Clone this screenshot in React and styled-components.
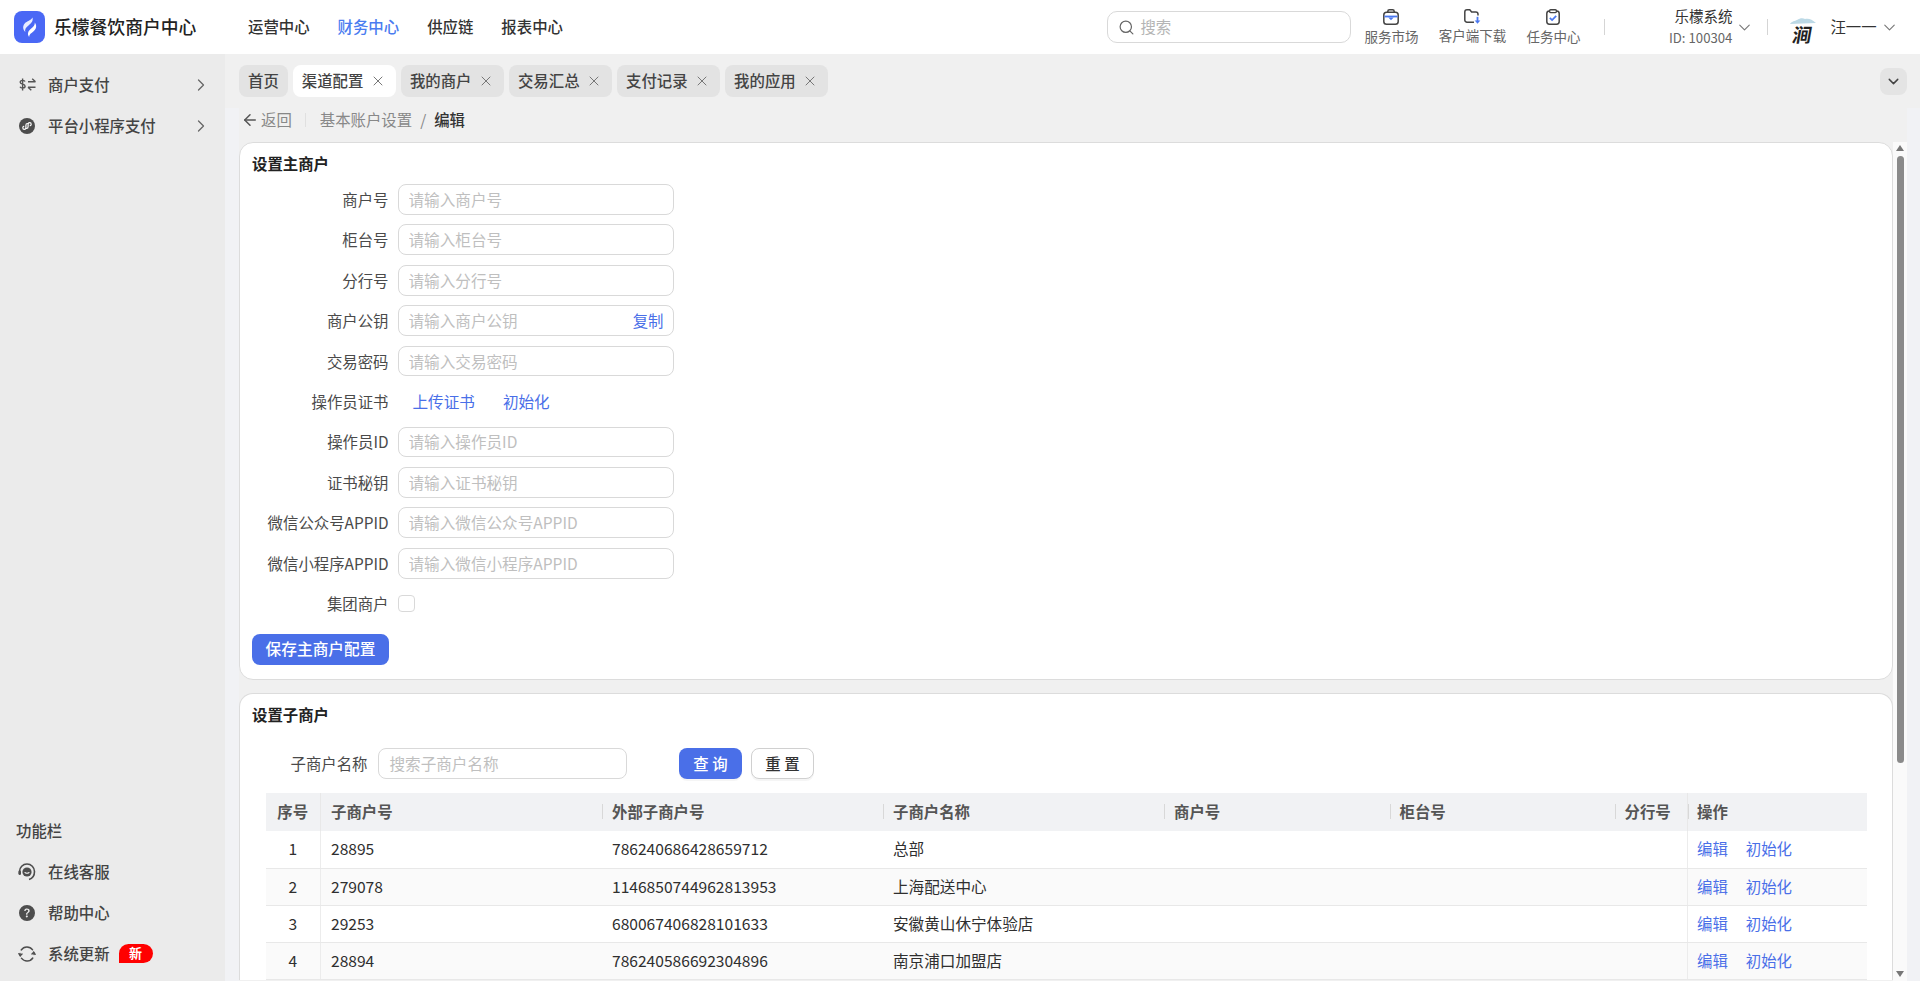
import React from "react";
import styled, { createGlobalStyle } from "styled-components";
import { ChevronDown, ChevronRight, Search, X, ArrowLeft } from "lucide-react";
import { BsQuestionCircleFill } from "react-icons/bs";

const blue = "#4a6fe8";

const GlobalStyle = createGlobalStyle`
  * { box-sizing: border-box; }
  html, body { margin: 0; padding: 0; height: 100%; overflow: hidden; }
  body {
    font-family: "Noto Sans CJK SC", "Noto Sans", sans-serif;
    font-size: 15.4px;
    color: #333;
    background: #f0f0f0;
  }
`;

const tabs = [
  { name: "首页", fixed: true },
  { name: "渠道配置", active: true },
  { name: "我的商户" },
  { name: "交易汇总" },
  { name: "支付记录" },
  { name: "我的应用" },
];

const fields = [
  { label: "商户号", placeholder: "请输入商户号" },
  { label: "柜台号", placeholder: "请输入柜台号" },
  { label: "分行号", placeholder: "请输入分行号" },
  { label: "商户公钥", placeholder: "请输入商户公钥", copy: true },
  { label: "交易密码", placeholder: "请输入交易密码" },
  { label: "操作员证书", links: ["上传证书", "初始化"] },
  { label: "操作员ID", placeholder: "请输入操作员ID" },
  { label: "证书秘钥", placeholder: "请输入证书秘钥" },
  { label: "微信公众号APPID", placeholder: "请输入微信公众号APPID" },
  { label: "微信小程序APPID", placeholder: "请输入微信小程序APPID" },
  { label: "集团商户", checkbox: true },
];

const rows = [
  ["1", "28895", "786240686428659712", "总部"],
  ["2", "279078", "1146850744962813953", "上海配送中心"],
  ["3", "29253", "680067406828101633", "安徽黄山休宁体验店"],
  ["4", "28894", "786240586692304896", "南京浦口加盟店"],
];

const LogoIcon = () => (
  <svg width="31" height="32" viewBox="0 0 31 32">
    <rect width="31" height="32" rx="8" fill="#4a68f5" />
    <path d="M18.5 6.5c.9 3.6-1.2 5.6-4 7.9-2.6 2.1-4 3.8-3.2 6.6-2.4-2.4-3-5.800-.6-8.500 2.300-2.600 6.200-2.900 7.800-6z" fill="#e9edff" />
    <path d="M20.800 11.500c2.200 3 1.700 6.300-1.200 8.800-2.400 2.100-4.400 2.900-4.500 5.700-1.900-2.500-1.500-5.300 1-7.500 2.400-2.100 4.800-3.500 4.700-7z" fill="#fff" />
  </svg>
);

const ExchangeIcon = () => (
  <svg width="17" height="13" viewBox="0 0 17 13" fill="none" stroke="#555" strokeWidth="1.400">
    <path d="M6 3.600C5.700 2.800 4.900 2.400 3.600 2.400 2.200 2.400 1.200 3 1.200 4.200s1 1.600 2.400 2 2.500.8 2.500 2c0 1.200-1.100 1.800-2.500 1.800-1.300 0-2.200-.5-2.600-1.300M3.600.6v11.800" />
    <path d="M9 3.800h7.500M13.200.8l3.300 3M16.500 9.200H9M12.300 12.200l-3.300-3" />
  </svg>
);

const MiniAppIcon = () => (
  <svg width="16" height="16" viewBox="0 0 16 16">
    <circle cx="8" cy="8" r="8" fill="#4d4d4d" />
    <path d="M6.900 7.200v2.500c0 1-.8 1.700-1.600 1.700s-1.500-.7-1.500-1.600c0-.7.400-1.200 1-1.500M9.100 8.800V6.300c0-1 .8-1.700 1.600-1.700s1.500.7 1.500 1.600c0 .7-.4 1.200-1 1.500M6.900 7.200c0-1 .9-1.700 1.500-1.700M9.100 8.800c0 1-.9 1.700-1.500 1.700" fill="none" stroke="#fff" strokeWidth="1.200" strokeLinecap="round" />
  </svg>
);

const ServiceIcon = () => (
  <svg width="18" height="18" viewBox="0 0 18 18" fill="none">
    <path d="M1.500 11V8.500a7.500 7.500 0 0 1 15 0c0 4-2 7-5.500 8" stroke="#4d4d4d" strokeWidth="1.600" />
    <circle cx="9" cy="9" r="4.600" fill="#4d4d4d" />
    <path d="M7 9.500c.5 1 3.500 1 4 0" stroke="#fff" strokeWidth="1.100" strokeLinecap="round" />
    <rect x="0.500" y="7.500" width="2.500" height="4.500" rx="1.200" fill="#4d4d4d" />
  </svg>
);

const UpdateIcon = () => (
  <svg width="18" height="18" viewBox="0 0 18 18" fill="none" stroke="#4d4d4d" strokeWidth="1.400" strokeLinecap="round">
    <path d="M3.200 5A7 7 0 0 1 14.600 4.800" />
    <path d="M14.800 13A7 7 0 0 1 3.400 13.200" />
    <path d="M16 9.500a7 7 0 0 0-.3-2.300M2 8.500a7 7 0 0 0 .3 2.300" />
    <path d="M0.800 8.700l1.500 2 1.700-1.700M17.200 9.300l-1.500-2-1.700 1.700" />
  </svg>
);

const BagIcon = () => (
  <svg width="16" height="16" viewBox="0 0 16 16" fill="none">
    <rect x="0.800" y="3.200" width="14.400" height="12" rx="2.800" stroke="#444" strokeWidth="1.500" />
    <path d="M4.800 3.200V2.400A1.600 1.600 0 0 1 6.400.8h3.200a1.600 1.600 0 0 1 1.600 1.600v.8" stroke="#444" strokeWidth="1.500" />
    <path d="M1.500 6.600h13v1.800H1.500z" fill="#4a78f0" />
    <path d="M5.300 8.400h5.400L8 11.200z" fill="#4a78f0" />
  </svg>
);

const FolderIcon = () => (
  <svg width="17" height="15" viewBox="0 0 17 15" fill="none">
    <path d="M10 13.200H3A2.200 2.200 0 0 1 .8 11V3A2.200 2.200 0 0 1 3 .8h2.800l1.800 2.200h4.200a2.200 2.200 0 0 1 2.200 2.200v1.300" stroke="#444" strokeWidth="1.500" />
    <path d="M13.500 7.800v5" stroke="#4a78f0" strokeWidth="1.800" />
    <path d="M10.700 11.400h5.600L13.500 14.800z" fill="#4a78f0" />
  </svg>
);

const ClipIcon = () => (
  <svg width="14" height="16" viewBox="0 0 14 16" fill="none">
    <rect x="0.800" y="2" width="12.400" height="13.200" rx="2.600" stroke="#444" strokeWidth="1.500" />
    <rect x="3.600" y="0.800" width="6.800" height="2.800" rx="1" fill="#fff" stroke="#444" strokeWidth="1.400" />
    <path d="M3.800 8.800l2.300 2.300 4.100-4.300" stroke="#4a78f0" strokeWidth="1.700" />
  </svg>
);

function App() {
  return (
    <Page>
      <GlobalStyle />
      <Header>
        <Brand>
          <LogoIcon />
          <BrandName>乐檬餐饮商户中心</BrandName>
        </Brand>
        <Nav>
          <NavItem>运营中心</NavItem>
          <NavItem $active>财务中心</NavItem>
          <NavItem>供应链</NavItem>
          <NavItem>报表中心</NavItem>
        </Nav>
        <SearchBox>
          <Search size={17} color="#666" strokeWidth={1.7} />
          <SearchInput placeholder="搜索" />
        </SearchBox>
        <Tools>
          <Tool $width={54}><BagIcon /><span>服务市场</span></Tool>
          <Tool $width={70}><FolderIcon /><span>客户端下载</span></Tool>
          <Tool $width={54}><ClipIcon /><span>任务中心</span></Tool>
        </Tools>
        <Divider $left={24} />
        <Org>
          <OrgName>乐檬系统</OrgName>
          <OrgId>ID: 100304</OrgId>
        </Org>
        <ChevronDown size={19} color="#777" strokeWidth={1.4} style={{ marginLeft: 3 }} />
        <Divider $left={13} />
        <Avatar>
          <svg width="28" height="8" viewBox="0 0 28 8">
            <path d="M1 7c2-3 5-3 7-4 3-2 6-2 8-1 3-1 7 0 11 4z" fill="#bcd9e6" />
          </svg>
          <AvatarChar>涧</AvatarChar>
        </Avatar>
        <UserName>汪一一</UserName>
        <ChevronDown size={19} color="#777" strokeWidth={1.4} style={{ marginLeft: 3 }} />
      </Header>

      <Body>
        <Sidebar>
          <div>
            <SideRow>
              <SideIcon><ExchangeIcon /></SideIcon>
              <SideText>商户支付</SideText>
              <SideArrow><ChevronRight size={20} color="#666" strokeWidth={1.5} /></SideArrow>
            </SideRow>
            <SideRow>
              <SideIcon><MiniAppIcon /></SideIcon>
              <SideText>平台小程序支付</SideText>
              <SideArrow><ChevronRight size={20} color="#666" strokeWidth={1.5} /></SideArrow>
            </SideRow>
          </div>
          <div>
            <SideTitle>功能栏</SideTitle>
            <SideRow>
              <SideIcon><ServiceIcon /></SideIcon>
              <SideText>在线客服</SideText>
            </SideRow>
            <SideRow>
              <SideIcon><BsQuestionCircleFill size={16} color="#4d4d4d" /></SideIcon>
              <SideText>帮助中心</SideText>
            </SideRow>
            <SideRow>
              <SideIcon><UpdateIcon /></SideIcon>
              <SideText>系统更新</SideText>
              <NewBadge>新</NewBadge>
            </SideRow>
          </div>
        </Sidebar>

        <Main>
          <TabBar>
            {tabs.map((t) => (
              <Tab key={t.name} $active={t.active} $fixed={t.fixed}>
                <TabText>{t.name}</TabText>
                {!t.fixed && <X size={16} color="#777" strokeWidth={1.5} />}
              </Tab>
            ))}
            <CollapseBtn><ChevronDown size={17} color="#444" strokeWidth={2} /></CollapseBtn>
          </TabBar>

          <Crumbs>
            <BackLink><ArrowLeft size={18} color="#555" strokeWidth={2} />返回</BackLink>
            <CrumbLine />
            <CrumbItem>基本账户设置</CrumbItem>
            <CrumbSlash>/</CrumbSlash>
            <CrumbCurrent>编辑</CrumbCurrent>
          </Crumbs>

          <ScrollRow>
            <Scroller>
              <Card>
                <CardTitle>设置主商户</CardTitle>
                <Form>
                  {fields.map((f) => (
                    <FormRow key={f.label}>
                      <FormLabel>{f.label}</FormLabel>
                      {f.placeholder && (
                        <InputWrap>
                          <TextInput placeholder={f.placeholder} />
                          {f.copy && <LinkText>复制</LinkText>}
                        </InputWrap>
                      )}
                      {f.links && (
                        <FormLinks>
                          {f.links.map((l) => <LinkText key={l}>{l}</LinkText>)}
                        </FormLinks>
                      )}
                      {f.checkbox && <CheckBox />}
                    </FormRow>
                  ))}
                </Form>
                <SaveButton>保存主商户配置</SaveButton>
              </Card>

              <SubCard>
                <CardTitle>设置子商户</CardTitle>
                <Filter>
                  <FilterLabel>子商户名称</FilterLabel>
                  <FilterInput placeholder="搜索子商户名称" />
                  <QueryButton>查 询</QueryButton>
                  <ResetButton>重 置</ResetButton>
                </Filter>
                <Table>
                  <colgroup>
                    <col width="55" />
                    <col width="281.500" />
                    <col width="281" />
                    <col width="281" />
                    <col width="225.500" />
                    <col width="225" />
                    <col width="73" />
                    <col width="179" />
                  </colgroup>
                  <thead>
                    <tr>
                      <Th $center $edge>序号</Th>
                      <Th>子商户号</Th>
                      <Th $line>外部子商户号</Th>
                      <Th $line>子商户名称</Th>
                      <Th $line>商户号</Th>
                      <Th $line>柜台号</Th>
                      <Th $line>分行号</Th>
                      <Th $line $ops>操作</Th>
                    </tr>
                  </thead>
                  <tbody>
                    {rows.map((r, i) => (
                      <Tr key={r[0]} $even={i % 2 === 1}>
                        <Td $center $edge>{r[0]}</Td>
                        <Td>{r[1]}</Td>
                        <Td>{r[2]}</Td>
                        <Td>{r[3]}</Td>
                        <Td />
                        <Td />
                        <Td />
                        <Td $ops>
                          <OpLink>编辑</OpLink>
                          <OpLink>初始化</OpLink>
                        </Td>
                      </Tr>
                    ))}
                  </tbody>
                </Table>
              </SubCard>
            </Scroller>
            <ScrollTrack>
              <ArrowUp />
              <ScrollThumb />
              <ArrowDown />
            </ScrollTrack>
          </ScrollRow>
        </Main>
      </Body>
    </Page>
  );
}

const Page = styled.div`
  height: 100vh;
  display: flex;
  flex-direction: column;
  overflow: hidden;
`;

const Header = styled.header`
  height: 54px;
  flex-shrink: 0;
  background: #fff;
  display: flex;
  align-items: center;
  padding-left: 14px;
`;

const Brand = styled.div`
  width: 234px;
  display: flex;
  align-items: center;
  gap: 9px;
  padding-bottom: 1px;
`;

const BrandName = styled.div`
  font-size: 17.800px;
  font-weight: 500;
  color: #222;
  white-space: nowrap;
  padding-bottom: 2px;
`;

const Nav = styled.nav`
  display: flex;
  gap: 28px;
  padding-bottom: 2px;
`;

const NavItem = styled.div`
  font-weight: 500;
  color: ${(p) => (p.$active ? "#4a7cf0" : "#333")};
`;

const SearchBox = styled.div`
  width: 244px;
  height: 32px;
  margin-left: 544.500px;
  border: 1px solid #d9d9d9;
  border-radius: 10px;
  display: flex;
  align-items: center;
  gap: 5px;
  padding-left: 10px;
`;

const SearchInput = styled.input`
  flex: 1;
  min-width: 0;
  border: none;
  outline: none;
  background: none;
  font: inherit;
  padding: 0 0 2px;
  &::placeholder { color: #b5b5b5; }
`;

const Tools = styled.div`
  display: flex;
  gap: 19px;
  margin-left: 13px;
`;

const Tool = styled.div`
  width: ${(p) => p.$width}px;
  display: flex;
  flex-direction: column;
  align-items: center;
  gap: 2px;
  font-size: 13.500px;
  line-height: 18px;
  color: #666;
  white-space: nowrap;
`;

const Divider = styled.div`
  width: 1px;
  height: 16px;
  background: #d5d5d5;
  margin-left: ${(p) => p.$left}px;
`;

const Org = styled.div`
  width: 127px;
  text-align: right;
`;

const OrgName = styled.div`
  font-size: 14.500px;
  line-height: 22px;
  color: #333;
`;

const OrgId = styled.div`
  font-size: 13.200px;
  line-height: 22px;
  color: #666;
`;

const Avatar = styled.div`
  width: 33px;
  height: 35px;
  margin-left: 18px;
  border-radius: 8px;
  background: #fff;
  display: flex;
  flex-direction: column;
  align-items: center;
  padding-top: 7px;
  overflow: hidden;
`;

const AvatarChar = styled.div`
  font-size: 19px;
  line-height: 19px;
  font-weight: 700;
  color: #222;
  transform: skewX(-10deg);
  margin-top: -1px;
`;

const UserName = styled.div`
  margin-left: 11px;
  padding-bottom: 2px;
  color: #333;
`;

const Body = styled.div`
  flex: 1;
  min-height: 0;
  display: flex;
`;

const Sidebar = styled.aside`
  width: 225px;
  flex-shrink: 0;
  background: #ebebeb;
  display: flex;
  flex-direction: column;
  justify-content: space-between;
  padding: 10px 0 7px;
`;

const SideRow = styled.div`
  height: 41px;
  display: flex;
  align-items: center;
  padding-left: 18px;
`;

const SideIcon = styled.div`
  width: 18px;
  height: 18px;
  display: flex;
  align-items: center;
  justify-content: center;
`;

const SideText = styled.div`
  margin-left: 12px;
  padding-bottom: 2px;
  font-weight: 500;
  color: #444;
`;

const SideArrow = styled.div`
  margin-left: auto;
  margin-right: 14px;
  display: flex;
`;

const SideTitle = styled.div`
  padding-left: 16px;
  line-height: 24px;
  margin-bottom: 9px;
  font-weight: 500;
  color: #444;
`;

const NewBadge = styled.div`
  width: 34px;
  height: 19px;
  margin-left: 9px;
  background: #f00;
  color: #fff;
  border-radius: 10px 10px 10px 0;
  font-size: 13px;
  font-weight: 700;
  line-height: 18px;
  text-align: center;
`;

const Main = styled.main`
  flex: 1;
  min-width: 0;
  display: flex;
  flex-direction: column;
  background: #f1f2f5;
`;

const TabBar = styled.div`
  height: 54px;
  flex-shrink: 0;
  background: #f0f0f0;
  display: flex;
  align-items: center;
  gap: 5px;
  padding: 0 13px 0 14px;
`;

const Tab = styled.div`
  height: 32px;
  display: flex;
  align-items: center;
  gap: 6.500px;
  padding: 0 ${(p) => (p.$fixed ? 9 : 10)}px 0 9px;
  border-radius: 8px;
  color: #444;
  background: ${(p) => (p.$active ? "#fff" : "#e3e3e3")};
`;

const TabText = styled.span`
  padding-bottom: 2px;
  font-weight: 500;
`;

const CollapseBtn = styled.div`
  width: 27px;
  height: 27px;
  margin-left: auto;
  border-radius: 8px;
  background: #e4e4e4;
  display: flex;
  align-items: center;
  justify-content: center;
`;

const Crumbs = styled.div`
  height: 34px;
  flex-shrink: 0;
  margin: 0 13px 0 14px;
  background: #f0f0f0;
  display: flex;
  align-items: flex-start;
  line-height: 23px;
  color: #888;
`;

const BackLink = styled.div`
  display: flex;
  align-items: center;
  gap: 2px;
  padding-left: 2px;
`;

const CrumbLine = styled.div`
  width: 1px;
  height: 14px;
  margin: 5px 14px 0 13px;
  background: #e0e0e0;
`;

const CrumbItem = styled.div`
  color: #888;
`;

const CrumbSlash = styled.div`
  margin: 0 8px;
  color: #888;
`;

const CrumbCurrent = styled.div`
  color: #333;
  font-weight: 500;
`;

const ScrollRow = styled.div`
  flex: 1;
  min-height: 0;
  display: flex;
  margin: 0 13px 0 14px;
  background: #f0f0f0;
`;

const Scroller = styled.div`
  flex: 1;
  min-width: 0;
  overflow: hidden;
`;

const Card = styled.section`
  background: #fff;
  border: 1px solid #dcdcdc;
  border-radius: 14px;
  padding: 9px 13px 14px 12px;
  margin-bottom: 13px;
`;

const SubCard = styled(Card)`
  padding-bottom: 0;
  border-bottom: none;
  margin-bottom: 0;
  border-bottom-left-radius: 0;
  border-bottom-right-radius: 0;
`;

const CardTitle = styled.div`
  font-weight: 700;
  line-height: 22px;
  color: #222;
`;

const Form = styled.div`
  display: flex;
  flex-direction: column;
  gap: 9.630px;
  margin-top: 10px;
`;

const FormRow = styled.div`
  height: 30.800px;
  display: flex;
  align-items: center;
  gap: 9px;
`;

const FormLabel = styled.label`
  width: 136.500px;
  padding-bottom: 1px;
  text-align: right;
  color: #4a4a4a;
  white-space: nowrap;
`;

const InputWrap = styled.div`
  width: 276px;
  height: 100%;
  border: 1px solid #d9d9d9;
  border-radius: 8px;
  display: flex;
  align-items: center;
  padding: 0 9px 0 10px;
`;

const TextInput = styled.input`
  flex: 1;
  min-width: 0;
  border: none;
  outline: none;
  padding: 0 0 1px;
  background: none;
  font: inherit;
  font-size: 15.600px;
  &::placeholder { color: #bfbfbf; }
`;

const LinkText = styled.a`
  color: ${blue};
  white-space: nowrap;
  cursor: pointer;
  padding-bottom: 1px;
`;

const FormLinks = styled.div`
  display: flex;
  gap: 28px;
  padding-left: 15px;
  font-size: 15.600px;
`;

const CheckBox = styled.div`
  width: 17.600px;
  height: 17.600px;
  border: 1px solid #d9d9d9;
  border-radius: 4px;
  background: #fff;
`;

const SaveButton = styled.button`
  display: block;
  width: 137px;
  height: 31px;
  margin-top: 15px;
  padding: 0 0 2px;
  border: none;
  border-radius: 8px;
  background: ${blue};
  color: #fff;
  font: inherit;
  font-size: 15.700px;
  font-weight: 500;
  cursor: pointer;
`;

const Filter = styled.div`
  display: flex;
  align-items: center;
  margin-top: 23px;
  padding-left: 38.500px;
`;

const FilterLabel = styled.label`
  color: #4a4a4a;
  white-space: nowrap;
  padding-bottom: 2px;
`;

const FilterInput = styled.input`
  width: 248.500px;
  height: 31px;
  margin-left: 11px;
  padding: 0 10px 1px;
  border: 1px solid #d9d9d9;
  border-radius: 8px;
  outline: none;
  font: inherit;
  font-size: 15.600px;
  &::placeholder { color: #bfbfbf; }
`;

const QueryButton = styled.button`
  width: 63px;
  height: 31px;
  margin-left: 52px;
  padding: 0 0 2px;
  border: none;
  border-radius: 8px;
  background: ${blue};
  color: #fff;
  font: inherit;
  font-weight: 500;
  box-shadow: 0 2px 0 rgba(0, 0, 0, 0.04);
`;

const ResetButton = styled(QueryButton)`
  margin-left: 9px;
  background: #fff;
  color: #333;
  border: 1px solid #d0d0d0;
`;

const Table = styled.table`
  width: 1601px;
  margin: 14px 0 0 13.500px;
  border-collapse: collapse;
  table-layout: fixed;
`;

const Th = styled.th`
  position: relative;
  height: 38px;
  padding: 0 0 2px ${(p) => (p.$center ? 0 : p.$ops ? 9 : 10)}px;
  background: #f1f2f4;
  font-weight: 600;
  color: #555;
  text-align: ${(p) => (p.$center ? "center" : "left")};
  border-right: ${(p) => (p.$edge ? "1px solid #e8e8e8" : "none")};
  ${(p) => p.$ops && "border-left: 1px solid #e8e8e8;"}

  ${(p) =>
    p.$line &&
    `&::before {
      content: "";
      position: absolute;
      left: 0;
      top: 11px;
      width: 1px;
      height: 15px;
      background: #d8d8d8;
    }`}
`;

const Tr = styled.tr`
  height: 37px;
  background: ${(p) => (p.$even ? "#fafafa" : "#fff")};
`;

const Td = styled.td`
  padding: 0 0 2px ${(p) => (p.$center ? 0 : p.$ops ? 9 : 10)}px;
  border-bottom: 1px solid #e8e8e8;
  color: #2f2f2f;
  font-size: 15.600px;
  text-align: ${(p) => (p.$center ? "center" : "left")};
  white-space: nowrap;
  border-right: ${(p) => (p.$edge ? "1px solid #ececec" : "none")};
  ${(p) => p.$ops && "border-left: 1px solid #ececec;"}
`;

const OpLink = styled.a`
  color: ${blue};
  font-size: 15.400px;
  margin-right: 18px;
  cursor: pointer;
`;

const ScrollTrack = styled.div`
  width: 14px;
  flex-shrink: 0;
  background: #fafafa;
  display: flex;
  flex-direction: column;
  align-items: center;
  padding: 3px 0 4px;
`;

const ArrowUp = styled.div`
  width: 0;
  height: 0;
  border-left: 4.500px solid transparent;
  border-right: 4.500px solid transparent;
  border-bottom: 6px solid #777;
  margin-bottom: 5px;
`;

const ArrowDown = styled.div`
  width: 0;
  height: 0;
  border-left: 4.500px solid transparent;
  border-right: 4.500px solid transparent;
  border-top: 6px solid #777;
  margin-top: auto;
`;

const ScrollThumb = styled.div`
  width: 7px;
  height: 607px;
  border-radius: 4px;
  background: #8a8a8a;
`;

export default App;
